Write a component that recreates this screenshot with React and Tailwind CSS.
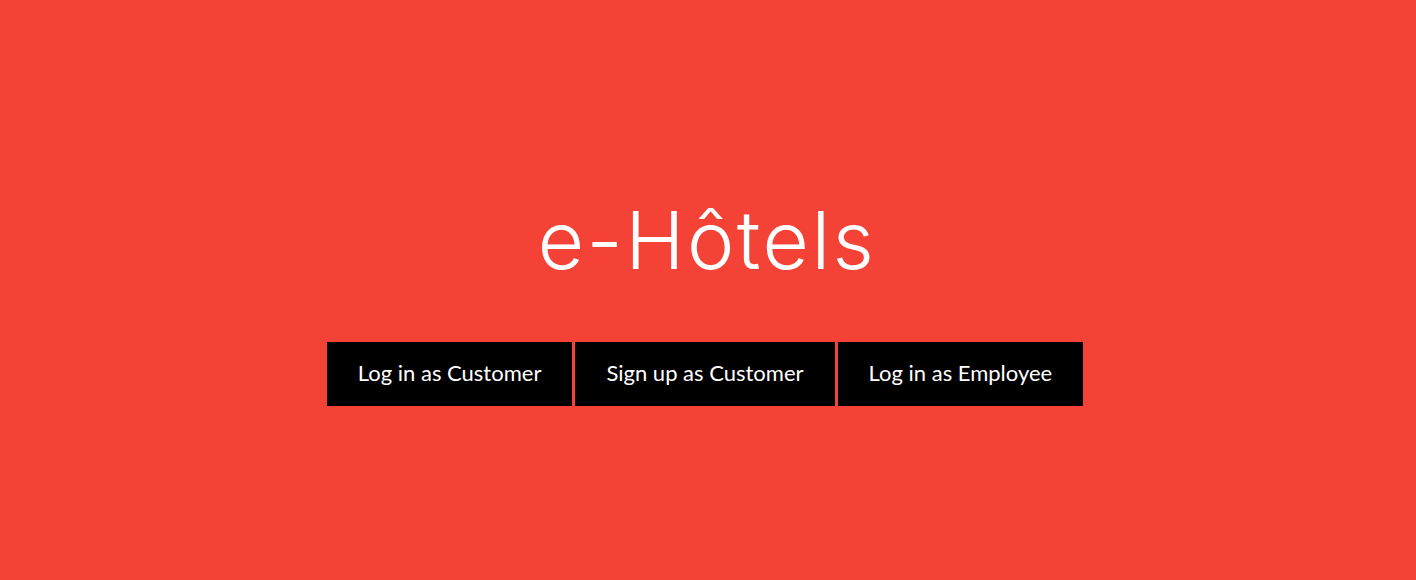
export default function App() {
  return (
    <div className="h-[580px] w-full bg-[#f44336] flex flex-col items-center pt-[190px]">
      <h1
        className="text-white text-[80px] leading-[100px] font-light tracking-[2.5px] mr-[2px]"
        style={{ fontFamily: "Inter, 'Open Sans', sans-serif" }}
      >
        e-Hôtels
      </h1>
      <div className="mt-[52px] mr-[6px] flex gap-[3px]" style={{ fontFamily: "Lato, sans-serif" }}>
        <button className="bg-black text-white text-[22px] h-[64px] px-[31px] pb-[3px]">Log in as Customer</button>
        <button className="bg-black text-white text-[22px] h-[64px] px-[31px] pb-[3px]">Sign up as Customer</button>
        <button className="bg-black text-white text-[22px] h-[64px] px-[31px] pb-[3px]">Log in as Employee</button>
      </div>
    </div>
  );
}
